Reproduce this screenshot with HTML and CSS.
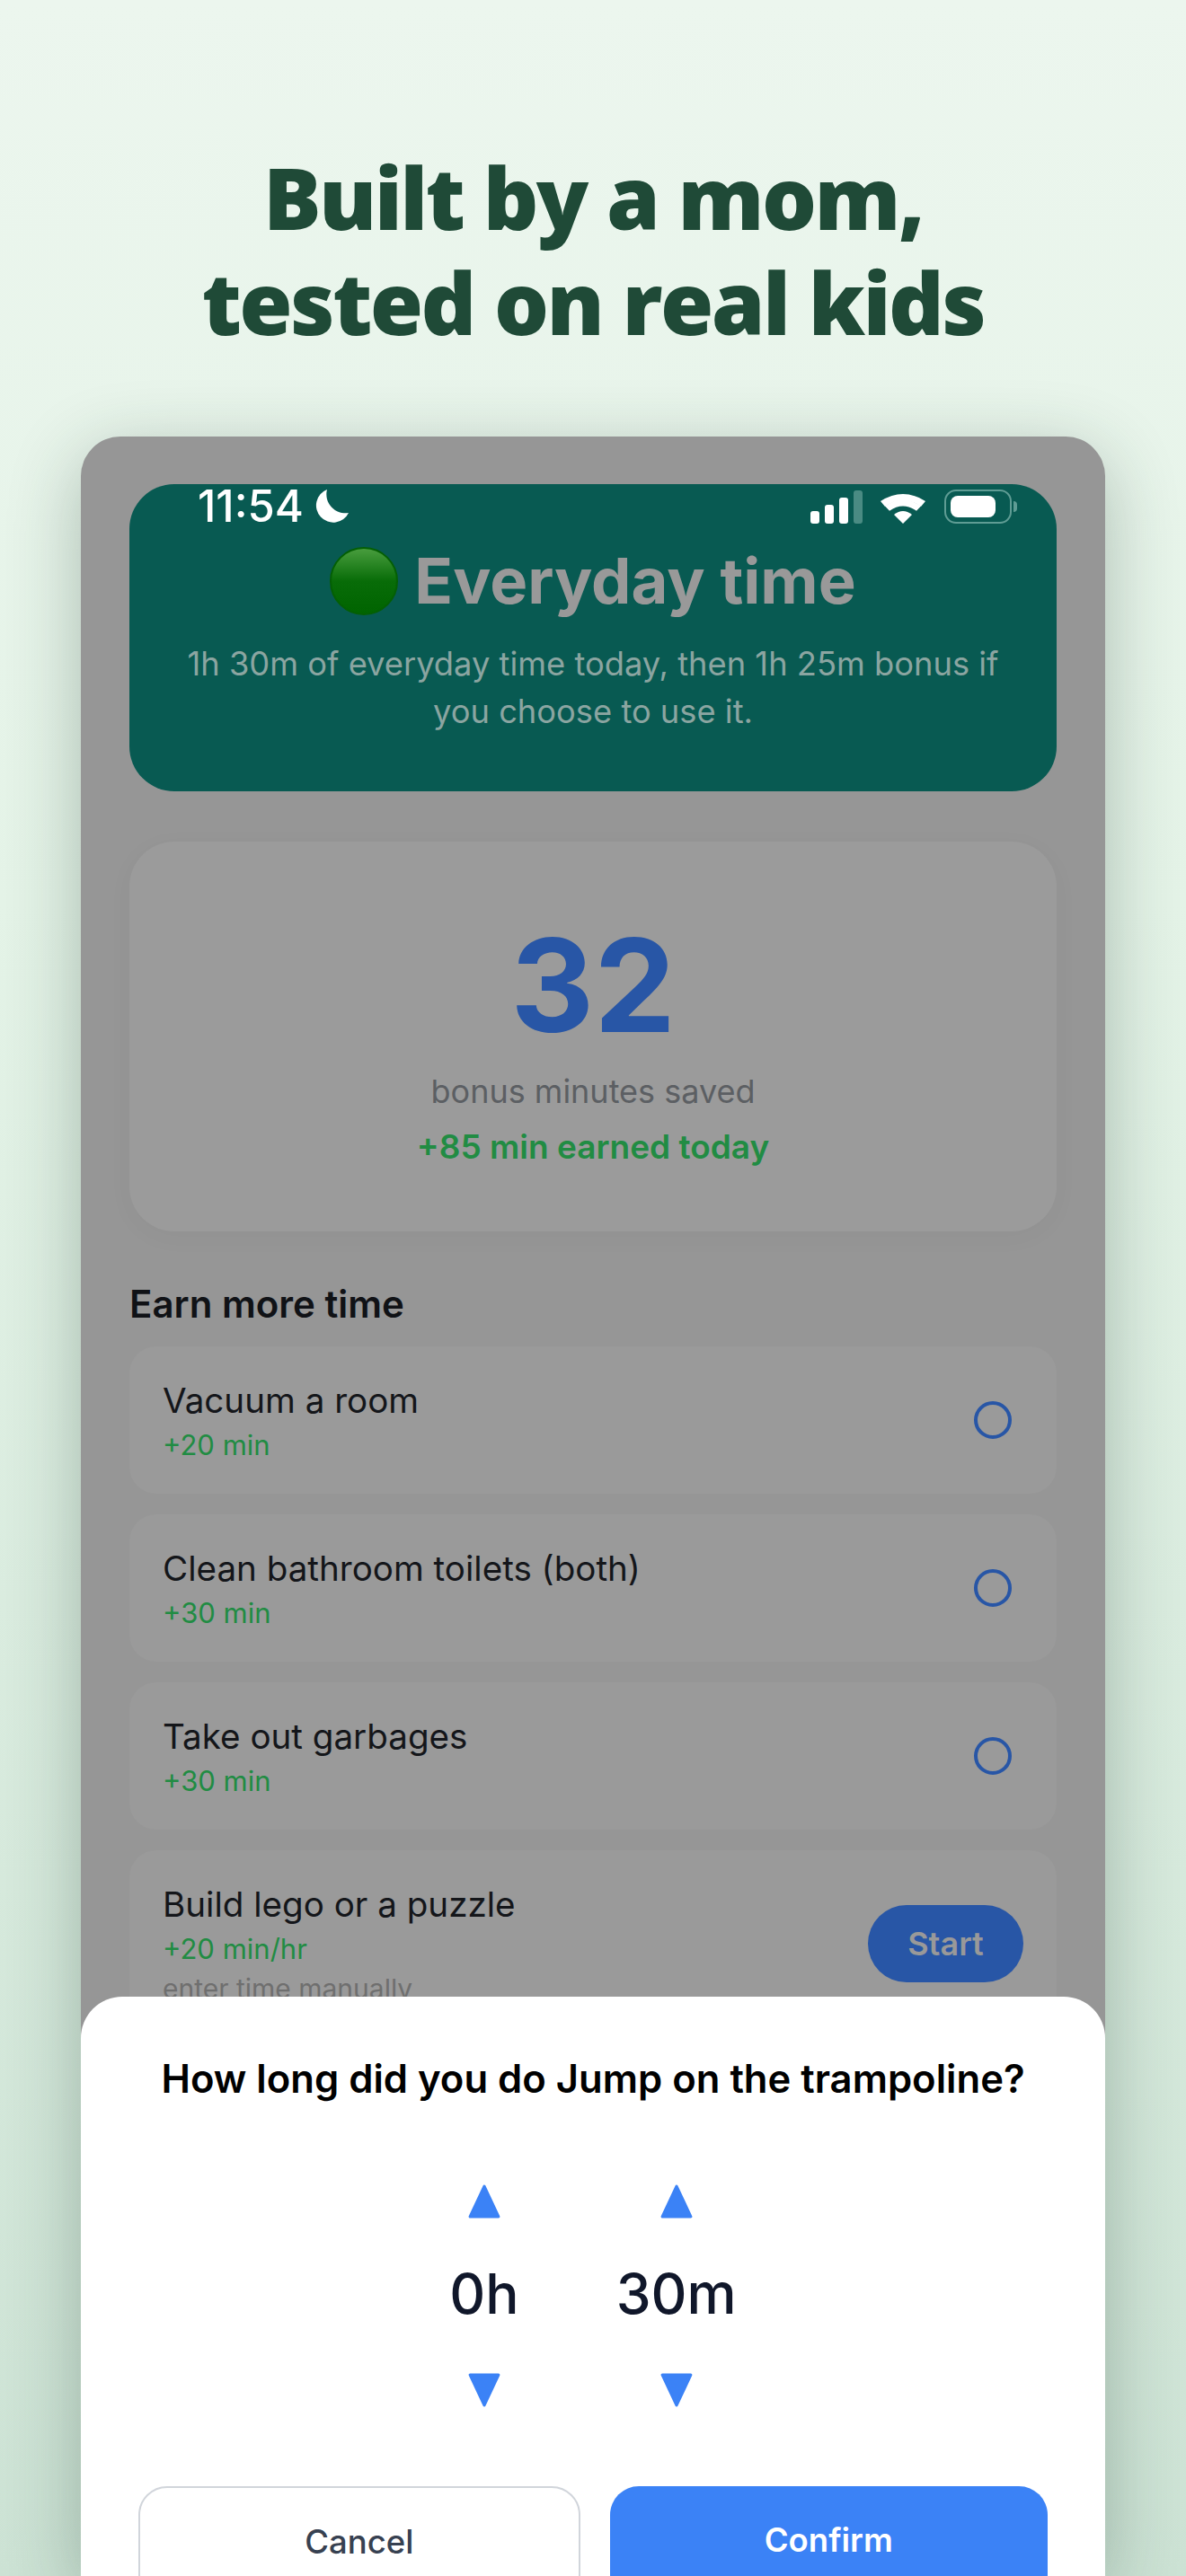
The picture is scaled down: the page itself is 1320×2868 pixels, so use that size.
FILE: index.html
```html
<!DOCTYPE html>
<html lang="en">
<head>
    <meta charset="UTF-8">
    <title>Built by a mom</title>
    <link rel="stylesheet" href="styles.css">
</head>
<body>
    <h1 class="headline">Built by a mom,<br>tested on real kids</h1>

    <div class="phone">
        <div class="hero">
            <div class="status">
                <div class="status-left">
                    <span class="clock">11:54</span>
                    <svg class="moon" viewBox="0 0 38 38"><path d="M14 0 A19 19 0 1 0 38 26 A21 21 0 0 1 14 0 Z" fill="#fff"/></svg>
                </div>
                <div class="status-right">
                    <svg class="signal" viewBox="0 0 58 37">
                        <rect x="0" y="23" width="10" height="14" rx="3" fill="#fff"/>
                        <rect x="16" y="16" width="10" height="21" rx="3" fill="#fff"/>
                        <rect x="32" y="8" width="10" height="29" rx="3" fill="#fff"/>
                        <rect x="48" y="0" width="10" height="37" rx="3" fill="#4a8b83"/>
                    </svg>
                    <svg class="wifi" viewBox="0 0 50 37">
                        <path d="M25 37 L15 27 Q25 19 35 27 Z" fill="#fff"/>
                        <path d="M10 22 L5 16 Q25 0 45 16 L40 22 Q25 10 10 22 Z" fill="#fff" transform="translate(0 3) scale(1 .9)"/>
                        <path d="M5 13 L0 7 Q25 -9 50 7 L45 13 Q25 -1 5 13 Z" fill="#fff" transform="translate(0 5)"/>
                    </svg>
                    <div class="battery"><div class="battery-level"></div></div>
                </div>
            </div>
            <h2 class="hero-title">
                <svg class="dot" viewBox="0 0 74 74">
                    <defs>
                        <linearGradient id="dotFill" x1="0" y1="0" x2="0" y2="1">
                            <stop offset="0" stop-color="#4a9e3f"/>
                            <stop offset=".5" stop-color="#086c08"/>
                            <stop offset="1" stop-color="#006400"/>
                        </linearGradient>
                    </defs>
                    <circle cx="37" cy="37" r="36" fill="url(#dotFill)" stroke="#045f04" stroke-width="2"/>
                </svg>
                Everyday time
            </h2>
            <p class="hero-text">1h 30m of everyday time today, then 1h 25m bonus if you choose to use it.</p>
        </div>

        <div class="stat">
            <div class="stat-number">32</div>
            <div class="stat-label">bonus minutes saved</div>
            <div class="stat-earned">+85 min earned today</div>
        </div>

        <h3 class="section-title">Earn more time</h3>

        <div class="tasks">
            <div class="task">
                <div>
                    <div class="task-name">Vacuum a room</div>
                    <div class="task-bonus">+20 min</div>
                </div>
                <div class="check"></div>
            </div>
            <div class="task">
                <div>
                    <div class="task-name">Clean bathroom toilets (both)</div>
                    <div class="task-bonus">+30 min</div>
                </div>
                <div class="check"></div>
            </div>
            <div class="task">
                <div>
                    <div class="task-name">Take out garbages</div>
                    <div class="task-bonus">+30 min</div>
                </div>
                <div class="check"></div>
            </div>
            <div class="task task-timed">
                <div>
                    <div class="task-name">Build lego or a puzzle</div>
                    <div class="task-bonus">+20 min/hr</div>
                    <div class="task-note">enter time manually</div>
                </div>
                <div class="start-btn">Start</div>
            </div>
        </div>

        <div class="sheet">
            <div class="sheet-title">How long did you do Jump on the trampoline?</div>
            <div class="picker">
                <div class="picker-col">
                    <svg class="arrow" viewBox="0 0 36 36"><polygon points="18,2 33,34 3,34" fill="#3b82f6" stroke="#3b82f6" stroke-width="3" stroke-linejoin="round"/></svg>
                    <div class="picker-value">0h</div>
                    <svg class="arrow" viewBox="0 0 36 36"><polygon points="3,2 33,2 18,34" fill="#3b82f6" stroke="#3b82f6" stroke-width="3" stroke-linejoin="round"/></svg>
                </div>
                <div class="picker-col">
                    <svg class="arrow" viewBox="0 0 36 36"><polygon points="18,2 33,34 3,34" fill="#3b82f6" stroke="#3b82f6" stroke-width="3" stroke-linejoin="round"/></svg>
                    <div class="picker-value">30m</div>
                    <svg class="arrow" viewBox="0 0 36 36"><polygon points="3,2 33,2 18,34" fill="#3b82f6" stroke="#3b82f6" stroke-width="3" stroke-linejoin="round"/></svg>
                </div>
            </div>
            <div class="sheet-buttons">
                <div class="btn btn-cancel">Cancel</div>
                <div class="btn btn-confirm">Confirm</div>
            </div>
        </div>
    </div>
</body>
</html>
```

FILE: styles.css
```css
html, body {
    margin: 0;
    height: 2868px;
    overflow: hidden;
}
body {
    background: linear-gradient(#ecf6ee 0%, #e4f3e7 35%, #cce2d4 100%);
    font-family: Inter, "Liberation Sans", sans-serif;
    padding-top: 160px;
    box-sizing: border-box;
}
.headline {
    margin: 0;
    text-align: center;
    font-family: "Open Sans", sans-serif;
    font-weight: 800;
    font-size: 96px;
    letter-spacing: -2.6px;
    line-height: 117px;
    color: #1f4a37;
}
.phone {
    position: relative;
    box-sizing: border-box;
    margin: 92px 90px 0;
    height: 2382px;
    padding: 53px 54px 0;
    background: #969696;
    border-radius: 44px 44px 0 0;
    box-shadow: 0 20px 80px rgba(30, 60, 45, .3);
}
.hero {
    height: 342px;
    background: #085a52;
    border-radius: 50px;
    text-align: center;
}
.status {
    display: flex;
    justify-content: space-between;
    align-items: center;
    height: 42px;
    padding: 4px 50px 0 76px;
}
.status-left, .status-right {
    display: flex;
    align-items: center;
}
.clock {
    color: #fff;
    font-size: 49px;
    font-weight: 500;
    line-height: 42px;
}
.moon {
    width: 38px;
    height: 38px;
    margin-left: 12px;
}
.signal {
    width: 58px;
    height: 37px;
}
.wifi {
    width: 50px;
    height: 37px;
    margin-left: 20px;
}
.battery {
    position: relative;
    box-sizing: border-box;
    width: 75px;
    height: 38px;
    margin-left: 21px;
    padding: 5px;
    border: 2px solid #5f9c94;
    border-radius: 13px;
}
.battery::after {
    content: "";
    position: absolute;
    right: -8px;
    top: 11px;
    width: 4px;
    height: 12px;
    background: #5f9c94;
    border-radius: 0 4px 4px 0;
}
.battery-level {
    width: 50px;
    height: 24px;
    background: #fff;
    border-radius: 8px;
}
.hero-title {
    display: flex;
    justify-content: center;
    align-items: center;
    gap: 18px;
    margin: 22px 0 0;
    color: #999;
    font-size: 70.5px;
    font-weight: 700;
    line-height: 80px;
}
.dot {
    width: 76px;
    height: 76px;
}
.hero-text {
    margin: 26px 48px 0;
    color: #8ba5a1;
    font-size: 36.3px;
    line-height: 53px;
}
.stat {
    height: 434px;
    margin-top: 56px;
    box-sizing: border-box;
    padding-top: 85px;
    background: #9b9b9b;
    border-radius: 50px;
    text-align: center;
    box-shadow: 0 6px 30px rgba(0, 0, 0, .03);
}
.stat-number {
    color: #2856a6;
    font-size: 144px;
    font-weight: 700;
    line-height: 150px;
}
.stat-label {
    margin-top: 18px;
    color: #5c5f63;
    font-size: 36px;
    line-height: 50px;
}
.stat-earned {
    margin-top: 12px;
    color: #218c43;
    font-size: 37px;
    font-weight: 600;
    line-height: 50px;
}
.section-title {
    margin: 56px 0 0;
    color: #101216;
    font-size: 42px;
    font-weight: 600;
    line-height: 50px;
}
.tasks {
    display: flex;
    flex-direction: column;
    gap: 23px;
    margin-top: 22px;
}
.task {
    display: flex;
    justify-content: space-between;
    align-items: center;
    box-sizing: border-box;
    height: 164px;
    padding: 0 50px 0 37px;
    background: #9a9a9a;
    border-radius: 30px;
}
.task-timed {
    height: 208px;
    padding-right: 37px;
}
.task-name {
    color: #14161a;
    font-size: 38.6px;
    line-height: 50px;
}
.task-bonus {
    margin-top: 6px;
    color: #218c43;
    font-size: 31px;
    line-height: 38px;
}
.task-note {
    margin-top: 6px;
    color: #6f6f6f;
    font-size: 30px;
    line-height: 38px;
}
.check {
    box-sizing: border-box;
    width: 42px;
    height: 42px;
    border: 4px solid #2856a6;
    border-radius: 50%;
}
.start-btn {
    width: 173px;
    height: 86px;
    background: #2856a6;
    border-radius: 43px;
    color: #999;
    font-size: 36px;
    font-weight: 600;
    line-height: 86px;
    text-align: center;
}
.sheet {
    position: absolute;
    left: 0;
    right: 0;
    top: 1737px;
    bottom: 0;
    overflow: hidden;
    box-sizing: border-box;
    padding-top: 64px;
    background: #fff;
    border-radius: 46px 46px 0 0;
}
.sheet-title {
    color: #000;
    font-size: 43.6px;
    font-weight: 600;
    line-height: 56px;
    text-align: center;
}
.picker {
    display: flex;
    justify-content: center;
    gap: 108px;
    margin-top: 89px;
}
.picker-col {
    display: flex;
    flex-direction: column;
    align-items: center;
}
.arrow {
    width: 38px;
    height: 38px;
}
.picker-value {
    margin: 46px 0 50px;
    color: #10172a;
    font-size: 62px;
    font-weight: 550;
    line-height: 76px;
}
.sheet-buttons {
    display: flex;
    gap: 33px;
    margin: 88px 64px 0;
}
.btn {
    flex: 1;
    box-sizing: border-box;
    height: 130px;
    border-radius: 32px;
    font-size: 36.5px;
    font-weight: 500;
    line-height: 120px;
    text-align: center;
}
.btn-cancel {
    border: 2px solid #d1d5db;
    color: #374151;
}
.btn-confirm {
    background: #3b82f6;
    color: #fff;
    font-weight: 600;
}
```
